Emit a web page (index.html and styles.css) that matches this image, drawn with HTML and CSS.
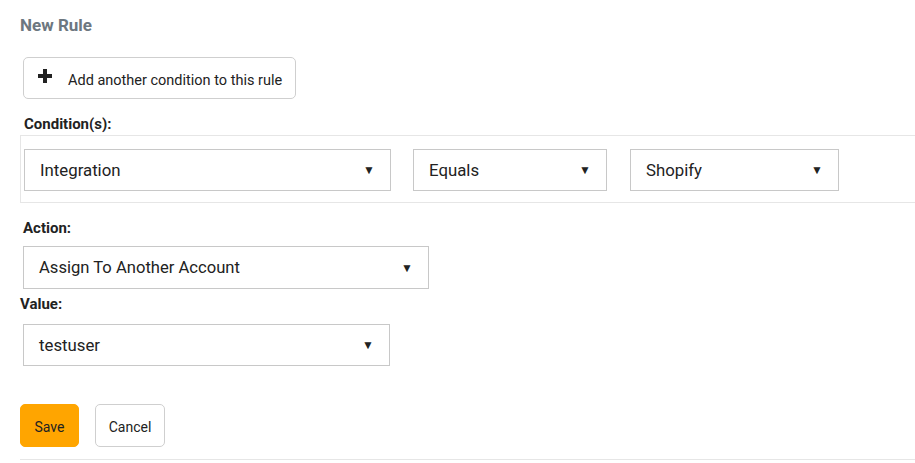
FILE: index.html
```html
<!DOCTYPE html>
<html lang="en">
<head>
  <meta charset="UTF-8">
  <title>New Rule</title>
  <link rel="stylesheet" href="styles.css">
</head>
<body>
  <div class="rule-form">
    <h2 class="title">New Rule</h2>

    <button type="button" class="add-btn">
      <svg class="plus" width="14" height="14" viewBox="0 0 14 14">
        <rect x="5" y="0" width="4" height="14" fill="#222"/>
        <rect x="0" y="5" width="14" height="4" fill="#222"/>
      </svg>
      <span>Add another condition to this rule</span>
    </button>

    <div class="label cond-label">Condition(s):</div>
    <div class="conditions">
      <div class="select w-integration"><span>Integration</span><span class="arrow">&#9660;</span></div>
      <div class="select w-equals"><span>Equals</span><span class="arrow">&#9660;</span></div>
      <div class="select w-shopify"><span>Shopify</span><span class="arrow">&#9660;</span></div>
    </div>

    <div class="label action-label">Action:</div>
    <div class="select w-action field-action"><span>Assign To Another Account</span><span class="arrow">&#9660;</span></div>

    <div class="label value-label">Value:</div>
    <div class="select w-value field-value"><span>testuser</span><span class="arrow">&#9660;</span></div>

    <div class="actions">
      <button type="button" class="btn btn-save">Save</button>
      <button type="button" class="btn btn-cancel">Cancel</button>
    </div>
    <hr class="divider">
  </div>
</body>
</html>
```

FILE: styles.css
```css
* {
  box-sizing: border-box;
}
body {
  margin: 0;
  padding: 0 0 0 20px;
  font-family: Roboto, "Liberation Sans", Arial, sans-serif;
  color: #222;
  background: #fff;
  overflow: hidden;
}
.title {
  margin: 15px 0 0;
  font-size: 17px;
  line-height: 20px;
  font-weight: 700;
  color: #6d7780;
}
.add-btn {
  display: flex;
  align-items: center;
  margin: 22px 0 0 3px;
  width: 273px;
  height: 42px;
  padding: 4px 0 0 14px;
  background: #fff;
  border: 1px solid #cfcfcf;
  border-radius: 5px;
  font-family: inherit;
  font-size: 14.5px;
  color: #222;
}
.add-btn .plus {
  margin: -9px 16px 0 0;
}
.label {
  font-size: 15px;
  line-height: 18px;
  font-weight: 700;
  color: #222;
}
.cond-label {
  margin: 16px 0 0 4px;
}
.conditions {
  display: flex;
  gap: 22px;
  margin-top: 2px;
  padding: 13px 0 11px 3px;
  border: 1px solid #e6e6e6;
  border-right: none;
}
.select {
  display: flex;
  align-items: center;
  justify-content: space-between;
  height: 42px;
  padding: 0 15px;
  border: 1px solid #c8c8c8;
  background: #fff;
  font-size: 16.8px;
  color: #222;
}
.select .arrow {
  font-size: 12px;
  color: #222;
}
.w-integration { width: 367px; }
.w-equals { width: 194px; }
.w-shopify { width: 209px; margin-left: 1px; }
.w-action { width: 406px; height: 43px; font-size: 16.6px; }
.w-value { width: 367px; }
.action-label {
  margin: 16px 0 0 3px;
}
.field-action {
  margin: 9px 0 0 3px;
}
.value-label {
  margin-top: 6px;
}
.field-value {
  margin: 11px 0 0 3px;
}
.actions {
  display: flex;
  gap: 16px;
  margin-top: 38px;
}
.btn {
  height: 43px;
  padding: 3px 0 0;
  border-radius: 5px;
  font-family: inherit;
  font-size: 14px;
  color: #222;
}
.btn-save {
  width: 59px;
  background: #ffa500;
  border: 1px solid #ffa500;
}
.btn-cancel {
  width: 70px;
  background: #fff;
  border: 1px solid #cfcfcf;
}
.divider {
  margin: 12px 0 0;
  border: none;
  border-top: 1px solid #e6e6e6;
}
```
